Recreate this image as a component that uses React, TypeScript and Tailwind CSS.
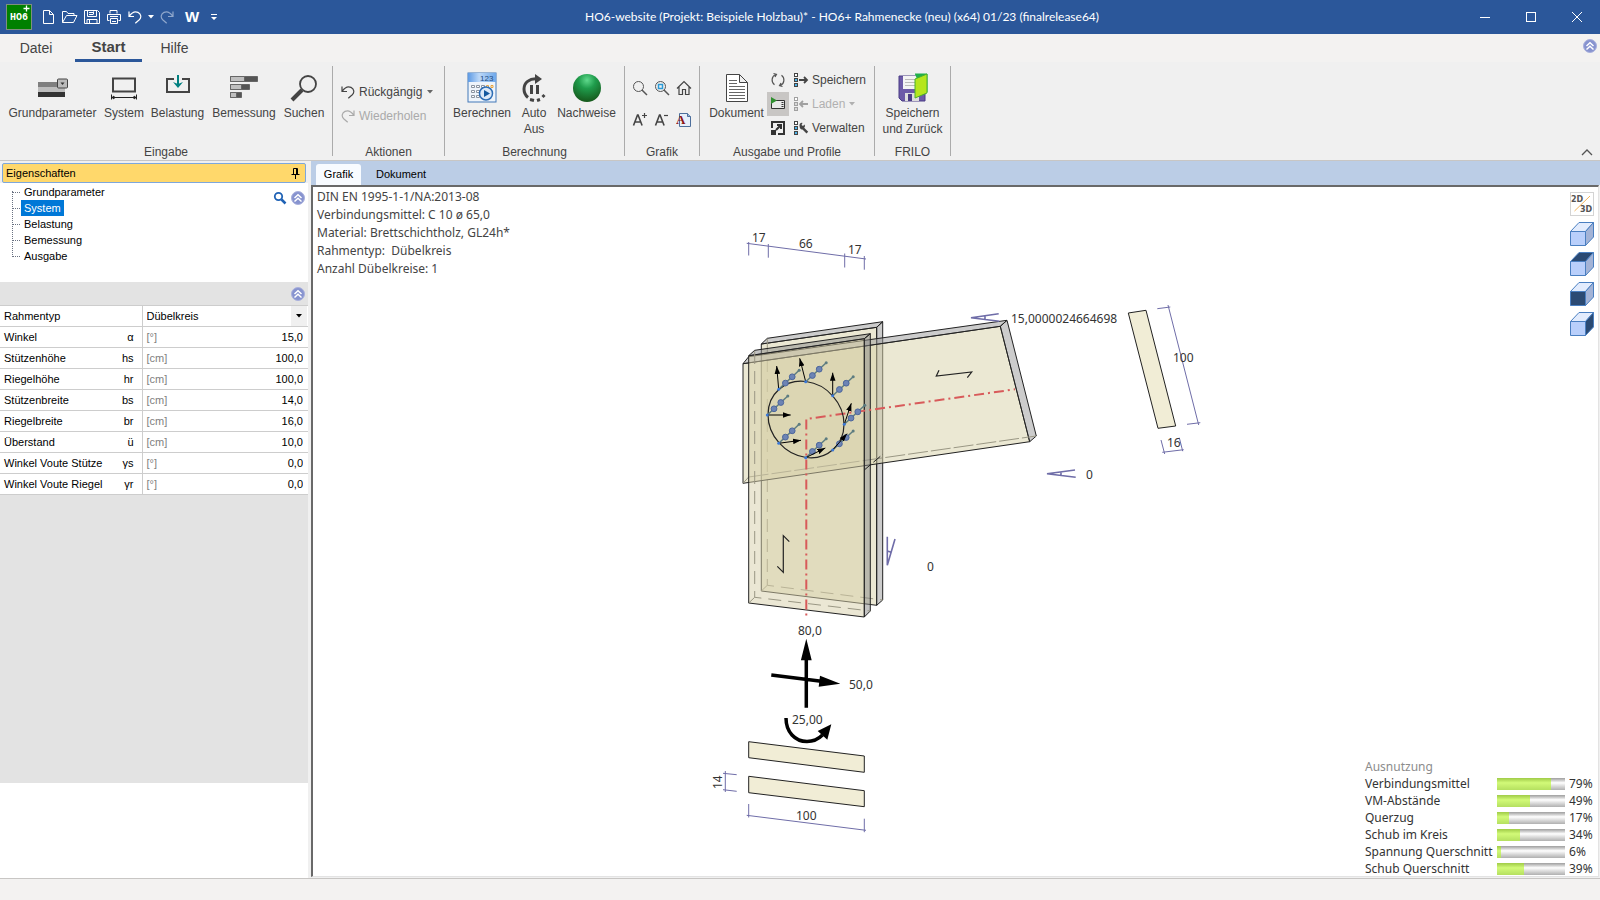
import type { ReactNode } from 'react';

const ui = "font-['Liberation_Sans',Arial,sans-serif]";
const draw = "font-['Noto_Sans','Open_Sans',sans-serif]";

const properties = [
  { id: 'winkel', name: 'Winkel', symbol: 'α', unit: '[°]', value: '15,0' },
  { id: 'hs', name: 'Stützenhöhe', symbol: 'hs', unit: '[cm]', value: '100,0' },
  { id: 'hr', name: 'Riegelhöhe', symbol: 'hr', unit: '[cm]', value: '100,0' },
  { id: 'bs', name: 'Stützenbreite', symbol: 'bs', unit: '[cm]', value: '14,0' },
  { id: 'br', name: 'Riegelbreite', symbol: 'br', unit: '[cm]', value: '16,0' },
  { id: 'ue', name: 'Überstand', symbol: 'ü', unit: '[cm]', value: '10,0' },
  { id: 'ys', name: 'Winkel Voute Stütze', symbol: 'γs', unit: '[°]', value: '0,0' },
  { id: 'yr', name: 'Winkel Voute Riegel', symbol: 'γr', unit: '[°]', value: '0,0' },
];

const treeItems = ['Grundparameter', 'System', 'Belastung', 'Bemessung', 'Ausgabe'];

const utilisation = [
  { name: 'Verbindungsmittel', value: 79 },
  { name: 'VM-Abstände', value: 49 },
  { name: 'Querzug', value: 17 },
  { name: 'Schub im Kreis', value: 34 },
  { name: 'Spannung Querschnitt', value: 6 },
  { name: 'Schub Querschnitt', value: 39 },
];

const info = [
  'DIN EN 1995-1-1/NA:2013-08',
  'Verbindungsmittel: C 10 ø 65,0',
  'Material: Brettschichtholz, GL24h*',
  'Rahmentyp:  Dübelkreis',
  'Anzahl Dübelkreise: 1',
];

function UndoIcon({ flip = false }: { flip?: boolean }) {
  return (
    <svg width="14" height="14" viewBox="0 0 14 14" fill="none" stroke="currentColor" strokeWidth="1.2" className={flip ? '-scale-x-100' : ''}>
      <path d="M1 1.500v5h5M1.300 6.200C3.500 3 7 1 10 2.400c3.300 1.600 3.600 5.200 1.300 7.400L7.300 13.300" />
    </svg>
  );
}

function ChevronBadge() {
  return (
    <svg width="14" height="14" viewBox="0 0 14 14">
      <circle cx="7" cy="7" r="6.500" fill="#8793cf" stroke="#a9b0dc" />
      <path d="M3.500 7 7 3.700 10.500 7M3.500 10.500 7 7.200l3.500 3.300" fill="none" stroke="#fff" strokeWidth="1.500" />
    </svg>
  );
}

function Caret() {
  return (
    <svg width="6" height="4" viewBox="0 0 6 4" fill="currentColor">
      <path d="M0 0h6L3 3.500z" />
    </svg>
  );
}

function TitleBar() {
  return (
    <header className="h-[34px] shrink-0 bg-[#2b579a] text-white flex items-center justify-between">
      <div className="flex items-center pl-[6px]">
        <svg width="26" height="26" viewBox="0 0 26 26">
          <rect x=".5" y=".5" width="25" height="25" fill="#008000" stroke="#7f8f7f" />
          <text x="4" y="16" fontSize="10" fontWeight="bold" fill="#fff" fontFamily="Liberation Mono">HO6</text>
          <path d="M20.500 1.500v6M17.500 4.500h6" stroke="#fff" strokeWidth="1.300" />
        </svg>
        <div className="ml-2 flex items-center gap-[6px]">
          <button aria-label="Neu" className="w-4">
            <svg width="16" height="16" viewBox="0 0 16 16" fill="none" stroke="#fff">
              <path d="M3.500 1.500h6l4 4v9h-10zM9.500 1.500v4h4" />
            </svg>
          </button>
          <button aria-label="Öffnen" className="w-4">
            <svg width="16" height="16" viewBox="0 0 16 16" fill="none" stroke="#fff">
              <path d="M.5 13.500v-11h4l1.500 2h6v2M.5 13.500h11l3.500-7H4.500z" />
            </svg>
          </button>
          <button aria-label="Speichern" className="w-4">
            <svg width="16" height="16" viewBox="0 0 16 16" fill="none" stroke="#fff">
              <path d="M.5 1.500h13l2 2v11H.5zM3.500 1.500v6h9v-6M3 14.500v-4h10v4M5.500 10.500v4M9.500 2.500v3M5 3.500h4M5 5.500h4" />
            </svg>
          </button>
          <button aria-label="Drucken" className="w-4">
            <svg width="16" height="16" viewBox="0 0 16 16" fill="none" stroke="#fff">
              <path d="M4 4.500v-3h7v3M3.500 11.500h-2v-6h13v6h-2M4.500 9.500h7v5h-7zM4 7.500h8M6 12.500h4" />
            </svg>
          </button>
          <button aria-label="Rückgängig" className="w-3.5"><UndoIcon /></button>
          <button aria-label="Liste"><Caret /></button>
          <button aria-label="Wiederholen" className="w-3.5 text-[#8fa7cc]"><UndoIcon flip /></button>
          <button aria-label="Word" className={`${ui} ml-1 w-4 text-[15px] leading-4 font-bold`}>W</button>
          <button aria-label="Anpassen" className="ml-1 w-3">
            <svg width="8" height="8" viewBox="0 0 8 8" fill="#fff"><path d="M1 1h6v1H1zM1 4h6L4 7z" /></svg>
          </button>
        </div>
      </div>
      <h1 className="font-[Lato,sans-serif] text-[12px] leading-4 whitespace-nowrap">
        HO6-website (Projekt: Beispiele Holzbau)* - HO6+ Rahmenecke (neu) (x64) 01/23 (finalrelease64)
      </h1>
      <div className="flex h-full">
        <button aria-label="Minimieren" className="w-[46px] grid place-items-center">
          <svg width="10" height="10"><path d="M0 5.500h10" stroke="#fff" /></svg>
        </button>
        <button aria-label="Maximieren" className="w-[46px] grid place-items-center">
          <svg width="10" height="10"><rect x=".5" y=".5" width="9" height="9" fill="none" stroke="#fff" /></svg>
        </button>
        <button aria-label="Schließen" className="w-[46px] grid place-items-center">
          <svg width="10" height="10"><path d="M0 0l10 10M10 0 0 10" stroke="#fff" /></svg>
        </button>
      </div>
    </header>
  );
}

function Group({ label, className, children }: { label: string; className: string; children: ReactNode }) {
  return (
    <section className={`flex flex-col border-r border-[#ababab] ${className}`}>
      <div className="flex-1 flex justify-center">{children}</div>
      <h2 className="h-3 text-center leading-4">{label}</h2>
    </section>
  );
}

function BigButton({ icon, lines, className }: { icon: ReactNode; lines: string[]; className: string }) {
  return (
    <button className={`flex flex-col items-center pt-[5px] ${className}`}>
      <span className="h-[34px] grid place-items-center">{icon}</span>
      {lines.map((line) => (
        <span key={line} className="leading-4 whitespace-nowrap">{line}</span>
      ))}
    </button>
  );
}

// row of three squares used by the profile commands
function ProfileIcon({ kind }: { kind: 'save' | 'load' | 'manage' }) {
  const off = kind === 'load';
  const line = off ? '#a0a0a0' : '#444';
  const fill = off ? '#d8d8d8' : '#4fb3e8';
  return (
    <svg width="16" height="16" viewBox="0 0 16 16" fill="none" stroke={line}>
      <rect x="1.500" y="1.500" width="3" height="3" fill="#fff" />
      <rect x="1.500" y="6.500" width="3" height="3" fill={fill} />
      <rect x="1.500" y="11.500" width="3" height="3" fill={fill} />
      {kind === 'save' && <path d="M6 8h8M11 5l3 3-3 3" strokeWidth="1.800" />}
      {kind === 'load' && <path d="M15 8H7M10 5 7 8l3 3" strokeWidth="1.800" />}
      {kind === 'manage' && (
        <path d="M6.500 5.500c0-2 1.500-3 3-2.500L8.500 5l1.500 1 1.500-1.500c.8 1.200.5 2.500-.3 3.200l4 4-1.700 1.700-4-4c-1.500.4-3-.9-3-3.900z" fill={line} stroke="none" />
      )}
    </svg>
  );
}

function Ribbon() {
  return (
    <div className={`${ui} shrink-0 bg-[#f0f0f0] text-[#444] text-[12px]`}>
      <nav className="h-7 bg-[#f3f2f1] flex justify-between text-[14px]">
        <div className="flex pl-[9px]">
          <button className="w-[54px]">Datei</button>
          <button className="ml-3 w-[67px] border-b-3 border-[#2b579a] text-[15px] font-bold leading-6">Start</button>
          <button className="ml-3 w-[41px]">Hilfe</button>
        </div>
        <button aria-label="Info" className="pr-[3px] pb-1"><ChevronBadge /></button>
      </nav>
      <div className="relative h-[99px] flex pt-1 pb-1 border-b border-[#c8c6c4]">
        <Group label="Eingabe" className="w-[333px]">
          <BigButton className="w-[97px]" lines={['Grundparameter']} icon={
            <svg width="32" height="22" viewBox="0 0 32 22">
              <path fill="#7f7f7f" d="M1 5h27v6H1z" /><path fill="#bdbdbd" d="M1 10h27v5H1z" /><path fill="#333" d="M1 15h27v5H1z" />
              <rect x="20.500" y="2" width="10" height="9" rx="1" fill="#bbb" stroke="#444" /><path fill="#333" d="M23.500 5.500h4l-2 2.500z" />
            </svg>
          } />
          <BigButton className="w-[46px]" lines={['System']} icon={
            <svg width="28" height="26" viewBox="0 0 28 26" fill="none" stroke="#444">
              <rect x="3" y="3.500" width="22" height="13" strokeWidth="2" />
              <path d="M1.500 19.500v5M26.500 19.500v5M2 22.500h24M2 22.500l2-1.500v3zM26 22.500l-2-1.500v3z" stroke="#222" />
            </svg>
          } />
          <BigButton className="w-[61px]" lines={['Belastung']} icon={
            <svg width="26" height="26" viewBox="0 0 26 26" fill="none">
              <path d="M9 4H2v13h22V4h-7" stroke="#444" strokeWidth="2" />
              <path d="M13 0v9" stroke="#008080" strokeWidth="2" /><path d="M8 7l5 2 5-2-5 6z" fill="#008080" />
            </svg>
          } />
          <BigButton className="w-[72px]" lines={['Bemessung']} icon={
            <svg width="30" height="26" viewBox="0 0 30 26" fill="#bfbfbf" stroke="#666">
              <path fill="#555" d="M1.500 1.500h27v5h-27zM1.500 9.500h19v5h-19zM1.500 17.500h11v5h-11z" />
              <path d="M1.500 1.500h14v5h-14zM1.500 9.500h11v5h-11zM1.500 17.500h6v5h-6z" />
            </svg>
          } />
          <BigButton className="w-12" lines={['Suchen']} icon={
            <svg width="28" height="28" viewBox="0 0 28 28" fill="none" stroke="#444">
              <circle cx="18" cy="10" r="8" strokeWidth="1.800" /><path d="M12 16 2 26" strokeWidth="4" />
            </svg>
          } />
        </Group>
        <Group label="Aktionen" className="w-28">
          <div className="w-full pl-2 pt-[14px] flex flex-col">
            <button className="h-6 flex items-center gap-1 whitespace-nowrap"><UndoIcon />Rückgängig<span className="ml-px text-[#666]"><Caret /></span></button>
            <button className="h-6 flex items-center gap-1 text-[#aaa]" disabled><UndoIcon flip />Wiederholen</button>
          </div>
        </Group>
        <Group label="Berechnung" className="w-[180px]">
          <BigButton className="w-[66px]" lines={['Berechnen']} icon={
            <svg width="30" height="32" viewBox="0 0 30 32">
              <defs><linearGradient id="calc" x2="1" y2="0"><stop stopColor="#5d9ae4" /><stop offset=".4" stopColor="#bcd8f8" /><stop offset="1" stopColor="#6fa8ea" /></linearGradient></defs>
              <rect x="1" y="1" width="28" height="29" fill="#eef4fb" stroke="#4378b8" /><path d="M1 1h28v9H1z" fill="url(#calc)" />
              <text x="13" y="9" fontSize="8" fill="#234b80" fontFamily="Liberation Sans">123</text>
              <g fill="#fff" stroke="#8a93a0"><path d="M4.500 13.500h3v2h-3zM9.500 13.500h3v2h-3zM14.500 13.500h3v2h-3zM4.500 18.500h3v2h-3zM9.500 18.500h3v2h-3zM4.500 23.500h3v2h-3zM9.500 23.500h3v2h-3z" /><path stroke="#e8a33c" d="M19.500 13.500h2v2h-2zM24 13.500h2v2h-2z" /></g>
              <circle cx="19" cy="21.500" r="6.500" fill="#dbe8f8" stroke="#2d6db5" strokeWidth="1.500" /><path d="M17 18l6 3.500-6 3.500z" fill="#14589f" />
            </svg>
          } />
          <BigButton className="w-[38px]" lines={['Auto', 'Aus']} icon={
            <svg width="26" height="30" viewBox="0 0 26 30" fill="none" stroke="#444" strokeWidth="3">
              <path d="M17 6C8 5 3 10 3 16c0 4 1.500 6.500 4 8.500" /><path d="M14 1l7 5-7 5z" fill="#444" stroke="none" />
              <path d="M10.500 12v9M16.500 12v9M9 26.500l4 1M16 27.500l3-1M21.500 24l2-2" />
            </svg>
          } />
          <BigButton className="w-[67px]" lines={['Nachweise']} icon={
            <svg width="30" height="30" viewBox="0 0 30 30">
              <defs><radialGradient id="ball" cx=".5" cy=".22" r=".75"><stop stopColor="#5fd98c" /><stop offset=".4" stopColor="#1f9c4c" /><stop offset="1" stopColor="#165c1e" /></radialGradient></defs>
              <circle cx="15" cy="15" r="14" fill="url(#ball)" />
            </svg>
          } />
        </Group>
        <Group label="Grafik" className="w-[75px]">
          <div className="grid grid-cols-3 grid-rows-2 w-[66px] h-16 mt-[6px] place-items-center">
            <button aria-label="Zoom"><svg width="16" height="16" viewBox="0 0 16 16" fill="none" stroke="#555"><circle cx="6.500" cy="6.500" r="5" /><path d="M10 10l5 5" strokeWidth="1.500" /></svg></button>
            <button aria-label="Zoom Fenster"><svg width="16" height="16" viewBox="0 0 16 16" fill="none" stroke="#555"><circle cx="6.500" cy="6.500" r="5" /><path d="M10 10l5 5" strokeWidth="1.500" /><path d="M4.500 4.500h4v4h-4z" stroke="#2c9bd6" strokeWidth="1.500" /></svg></button>
            <button aria-label="Alles zeigen"><svg width="16" height="16" viewBox="0 0 16 16" fill="none" stroke="#444" strokeWidth="1.200"><path d="M1 8.500 8 1.500l7 7M3 7v7.500h3.500v-5h3v5H13V7" /></svg></button>
            <button aria-label="Schrift größer">
              <svg width="16" height="16" viewBox="0 0 16 16" fill="none" stroke="#444"><path d="M1.500 13.500 5.500 3h.6l4 10.500M3 10h5.500" strokeWidth="1.600" /><path d="M12.500 1v5M10 3.500h5" strokeWidth="1.200" /></svg>
            </button>
            <button aria-label="Schrift kleiner">
              <svg width="16" height="16" viewBox="0 0 16 16" fill="none" stroke="#444"><path d="M1.500 13.500 5.500 3h.6l4 10.500M3 10h5.500" strokeWidth="1.600" /><path d="M10 3.500h4" strokeWidth="1.200" /></svg>
            </button>
            <button aria-label="Schriftart">
              <svg width="16" height="16" viewBox="0 0 16 16"><path d="M3.500 1.500h8l3 3v10h-11z" fill="#e6effa" stroke="#4d6f9c" /><path d="M11.500 1.500v3h3" fill="#9db9dc" stroke="#4d6f9c" /><text x="0" y="12" fontSize="13" fontWeight="bold" fill="#8b1414" fontFamily="Liberation Serif">A</text></svg>
            </button>
          </div>
        </Group>
        <Group label="Ausgabe und Profile" className="w-[175px]">
          <BigButton className="w-[61px] ml-[6px]" lines={['Dokument']} icon={
            <svg width="22" height="30" viewBox="0 0 22 30" fill="#fff" stroke="#444">
              <path d="M.5 1.500h13l8 8v19H.5zM13.500 1.500v8h8" /><path d="M3 7.500h8M3 10.500h8M3 13.500h16M3 16.500h16M3 19.500h16M3 22.500h16M3 25.500h16" stroke="#666" />
            </svg>
          } />
          <div className="flex flex-col pt-[2px]">
            <button aria-label="Aktualisieren" className="w-[22px] h-6 grid place-items-center">
              <svg width="16" height="16" viewBox="0 0 16 16" fill="none" stroke="#555" strokeWidth="1.200"><path d="M5.500 2.500a6 6 0 0 0-1 10.200M10.500 13.500a6 6 0 0 0 1-10.200M3.500 1.500l3 .8L5 5M12.500 14.500l-3-.8L11 11" /></svg>
            </button>
            <button aria-label="Vorschau" className="w-[22px] h-6 bg-[#c8c6c4] grid place-items-center">
              <svg width="16" height="16" viewBox="0 0 16 16"><path d="M1.500 4.500h13v8h-13z" fill="#e8e8e8" stroke="#333" /><path d="M12.500 4v9" stroke="#333" strokeDasharray="1 1" strokeWidth="2" /><path d="M1 1l6 3.500L1 8z" fill="#2f8f2f" /></svg>
            </button>
            <button aria-label="Extern öffnen" className="w-[22px] h-6 grid place-items-center">
              <svg width="16" height="16" viewBox="0 0 16 16" fill="none" stroke="#333" strokeWidth="2"><path d="M2 8V2h12v12H8" /><path d="M1 10h5v5H1z" fill="#333" stroke="none" /><path d="M7 5h4v4M11 5 6 10" /></svg>
            </button>
          </div>
          <div className="flex-1 flex flex-col pt-[2px] pl-1">
            <button className="h-6 flex items-center gap-[3px]"><ProfileIcon kind="save" />Speichern</button>
            <button className="h-6 flex items-center gap-[3px] text-[#b0b0b0]" disabled><ProfileIcon kind="load" />Laden<span className="ml-px"><Caret /></span></button>
            <button className="h-6 flex items-center gap-[3px]"><ProfileIcon kind="manage" />Verwalten</button>
          </div>
        </Group>
        <Group label="FRILO" className="w-[76px]">
          <BigButton className="w-[68px]" lines={['Speichern', 'und Zurück']} icon={
            <svg width="30" height="30" viewBox="0 0 30 30">
              <path d="M1 3h26v25H4l-3-3z" fill="#6c5aa8" stroke="#4b3d85" /><path d="M5 3h14v13H5z" fill="#f4f4f4" /><path d="M7 6.500h10M7 9.500h10M7 12.500h10" stroke="#bbb" />
              <path d="M7 20h14v8H7z" fill="#ddd" /><path d="M10 21h4v7h-4z" fill="#4b3d85" />
              <path d="M17 1h12v18h-5" fill="#21b14b" stroke="#21b14b" /><path d="M29 1v19l-12 5V6z" fill="#b5e61d" stroke="#4ab02c" />
            </svg>
          } />
        </Group>
        <button aria-label="Menüband reduzieren" className="absolute right-[7px] bottom-1">
          <svg width="12" height="7" viewBox="0 0 12 7" fill="none" stroke="#555" strokeWidth="1.300"><path d="M1 6l5-5 5 5" /></svg>
        </button>
      </div>
    </div>
  );
}

function Sidebar() {
  return (
    <aside className={`${ui} w-[308px] shrink-0 flex flex-col text-[11px] text-black`}>
      <div className="h-5 mt-[2px] mx-[2px] pl-[3px] pr-[5px] shrink-0 flex items-center justify-between bg-[#ffd86b] border border-[#7da7dc] rounded-[2px]">
        <h2>Eigenschaften</h2>
        <button aria-label="Anheften">
          <svg width="9" height="11" viewBox="0 0 9 11" fill="none" stroke="#000"><path d="M2.500 6V.5h4V6M5.500.5V6M.5 6.500h8M4.500 7v4" /></svg>
        </button>
      </div>
      <div className="h-[99px] shrink-0 bg-white flex justify-between">
        <ul className="relative ml-3 pt-px">
          <li aria-hidden className="absolute left-0 top-2 h-[66px] border-l border-dotted border-gray-500" />
          {treeItems.map((item) => (
            <li key={item} className="h-4 flex items-center">
              <span className="w-2 border-t border-dotted border-gray-500" />
              <button className={item === 'System' ? 'ml-px h-4 px-[3px] bg-[#0078d7] text-white' : 'ml-px h-4 px-[3px]'}>{item}</button>
            </li>
          ))}
        </ul>
        <div className="flex gap-1 pr-[3px] pt-2 h-5">
          <button aria-label="Suchen">
            <svg width="14" height="14" viewBox="0 0 14 14" fill="none" stroke="#1f62b5"><circle cx="5.500" cy="5.500" r="3.700" strokeWidth="1.800" /><path d="M8.500 8.500l4 4" strokeWidth="2.500" /></svg>
          </button>
          <button aria-label="Einklappen"><ChevronBadge /></button>
        </div>
      </div>
      <div className="h-[23px] shrink-0 bg-[#e3e3e3] flex items-center justify-end pr-[3px]">
        <button aria-label="Einklappen"><ChevronBadge /></button>
      </div>
      <table className="w-full shrink-0 table-fixed border-collapse bg-white">
        <tbody>
          <tr className="h-[21px] border-y border-[#cdcdcd]">
            <th scope="row" className="w-[142px] p-0 pl-1 border-r border-[#cdcdcd] text-left font-normal"><label htmlFor="rahmentyp">Rahmentyp</label></th>
            <td className="p-0">
              <div className="flex items-center pr-px">
                <select id="rahmentyp" className="flex-1 h-5 pl-1 appearance-none bg-transparent outline-none">
                  <option>Dübelkreis</option>
                </select>
                <span className="w-4 h-5 bg-[#f0f0f0] grid place-items-center pointer-events-none"><Caret /></span>
              </div>
            </td>
          </tr>
          {properties.map((p) => (
            <tr key={p.id} className="h-[21px] border-b border-[#cdcdcd]">
              <th scope="row" className="p-0 pl-1 pr-2 border-r border-[#cdcdcd] text-left font-normal">
                <label htmlFor={p.id} className="flex justify-between whitespace-nowrap"><span>{p.name}</span><span>{p.symbol}</span></label>
              </th>
              <td className="p-0">
                <div className="flex items-center pl-1 pr-[5px]">
                  <span className="text-[#808080]">{p.unit}</span>
                  <input id={p.id} defaultValue={p.value} className="flex-1 min-w-0 h-5 text-right bg-transparent outline-none" />
                </div>
              </td>
            </tr>
          ))}
        </tbody>
      </table>
      <div className="flex-1 bg-[#e3e3e3]" />
      <div className="h-[95px] shrink-0 bg-white" />
    </aside>
  );
}

const dowels = [
  { x: 767.300, y: 415, tx: 790.700, ty: 415 },
  { x: 778.700, y: 389.300, tx: 776.700, ty: 366 },
  { x: 805.700, y: 381.700, tx: 799.700, ty: 358.300 },
  { x: 832.700, y: 395.700, tx: 832.700, ty: 372.700 },
  { x: 844.300, y: 424.300, tx: 851.300, ty: 403.300 },
  { x: 832.700, y: 450, tx: 847, ty: 433.700 },
  { x: 805.700, y: 457.700, tx: 825.300, ty: 448 },
  { x: 778.700, y: 443.300, tx: 801, ty: 440.300 },
];

function FrameDrawing() {
  return (
    <svg width="510" height="620" viewBox="701 222 510 620" fill="none" stroke="#222" strokeWidth="1" role="img" aria-label="Rahmenecke">
      <defs>
        <marker id="tip" markerUnits="userSpaceOnUse" markerWidth="8" markerHeight="6" refX="8" refY="3" orient="auto">
          <path d="M0 .2 8 3 0 5.800z" fill="#000" stroke="none" />
        </marker>
      </defs>

      {/* rear post */}
      <path d="M761.300 344V591l115.400 14.300V327.300z" fill="#d7d2a7" fillOpacity=".5" />
      <path d="M761.300 344l6-5.700 115.400-16.600-6 5.600zM876.700 327.300l6-5.600V600l-6 5.300z" fill="#999" fillOpacity=".5" />
      <path d="M767.300 339v246.300L882.700 600" stroke="#9a9784" strokeDasharray="13 7" />
      <path d="M767.300 585.300l-6 5.700" stroke="#9a9784" />

      {/* beam */}
      <path d="M743 363.700l257.300-37.400 29.400 115.400L743 483.300z" fill="#d7d2a7" fillOpacity=".5" />
      <path d="M743 363.700l5.700-7L1007 320.300l-6.700 6zM1000.300 326.300l6.700-6L1036.300 436l-6.600 5.700z" fill="#999" fillOpacity=".5" />
      <path d="M748.700 477 1036 436" stroke="#9a9784" strokeDasharray="20 3" />
      <path d="M743 483.300l5.700-6.300" stroke="#9a9784" />

      {/* front post */}
      <path d="M748.700 355.700V603l115.600 14V338.700z" fill="#d7cfa9" fillOpacity=".5" />
      <path d="M748.700 355.700l6-5.400 115.600-16.600-6 5zM864.300 338.700l6-5V611l-6 6z" fill="#888" fillOpacity=".5" />
      <path d="M754.700 351v246.300L870.300 611" stroke="#9a9784" strokeDasharray="13 7" />
      <path d="M754.700 597.300l-6 5.700" stroke="#9a9784" />
      <path d="M864.300 470l18.400-15.700" strokeDasharray="9 3" />

      <path d="M806.300 615.500V419L1015 389.300" stroke="#d85a5a" strokeWidth="2" strokeDasharray="2 4 10 4" />
      <circle r="38" transform="matrix(1 .126 0 1 806 419.500)" strokeWidth="1.200" />
      <path d="M939 370.300l-2.700 5.700 35.400-4-4.400 5.700M789.300 541.700l-6-6v36.600l-6-6" strokeWidth="1.200" />

      {dowels.map((d) => (
        <g key={`${d.x}-${d.y}`}>
          <path d={`M${d.x} ${d.y}l20.500-19`} stroke="#5d7c80" strokeWidth="1.500" />
          <g fill="#6d84b4" stroke="#4d669c">
            <circle cx={d.x + 6.700} cy={d.y - 6.200} r="2.900" />
            <circle cx={d.x + 13.500} cy={d.y - 12.500} r="2.900" />
          </g>
          <circle cx={d.x + 20.500} cy={d.y - 19} r="1.500" fill="#5d7c80" stroke="none" />
          <path d={`M${d.x} ${d.y}L${d.tx} ${d.ty}`} stroke="#000" markerEnd="url(#tip)" />
          <circle cx={d.x} cy={d.y} r="1.500" fill="#3a78d8" stroke="none" />
        </g>
      ))}

      {/* loads */}
      <g fill="#000" stroke="none">
        <path d="M806.300 638.700l5.400 21.500h-10.800zM840.300 683.700l-20.300-8-1.300 11zM831.300 724.300 817.700 731l9.600 8.700z" />
        <path d="M806.300 707.700V655M771.300 675l50 6.300M786 718c0 14 9 23.500 21 23.500 7 0 11-2 15.500-6.500" fill="none" stroke="#000" strokeWidth="3.500" />
      </g>

      {/* cross sections */}
      <g fill="#f1edd6">
        <path d="M748.700 741.700l115.600 14.300v16.300l-115.600-14.600zM748.700 776.300l115.600 14.400v16l-115.600-14z" />
        <path d="M1128.300 313l17.700-2.700L1175.700 426l-17.700 2.300z" />
      </g>

      {/* dimension lines */}
      <g stroke="#6f6da8">
        <path d="M746.700 243.300 866 259M748.700 242v13.500M768.300 244v13.700M844.700 253.500v14M864.300 256v13.700" />
        <path d="M725.300 771v21M723 773.300l13.700 1.400M723 789.700l13.700 1.600" />
        <path d="M748.700 804v13.500M746.700 815.300l119.300 15M864.300 818.700v13.500" />
        <path d="M1157.300 308.700l13-1.700M1168 305l30.700 120M1187 424.300l13.300-1.600" />
        <path d="M1161 440l3.700 14M1162.300 452.300l21.400-2.600M1179.300 437.700l3.400 13.500" />
        <path strokeWidth="1.600" d="M998.700 313.700l-27.700 4 28.300 3.500M985 316v3.500M1075 470l-28 3.700 28.700 3.600M1061 472v3.500M887.300 536.700v28.600L895 539M887.300 551l4 1.300" />
      </g>

      <g fill="#333" stroke="none" fontSize="12" className={draw}>
        <text x="752" y="242">17</text>
        <text x="799" y="248">66</text>
        <text x="848" y="254">17</text>
        <text x="1011" y="323">15,0000024664698</text>
        <text x="1173" y="362">100</text>
        <text x="1167" y="447">16</text>
        <text x="1086" y="479">0</text>
        <text x="927" y="571">0</text>
        <text x="798" y="635">80,0</text>
        <text x="849" y="689">50,0</text>
        <text x="792" y="724">25,00</text>
        <text x="796" y="820">100</text>
        <text x="0" y="0" transform="translate(722 789) rotate(-90)">14</text>
      </g>
    </svg>
  );
}

function Cube({ top = '#e3ecfd', front = '#b9cffb', side = '#a3b3d6' }: { top?: string; front?: string; side?: string }) {
  return (
    <svg width="24" height="24" viewBox="0 0 24 24" stroke="#4a7fc1" strokeLinejoin="round">
      <path d="M.5 9.500 9 .5h14.500l-8 9z" fill={top} />
      <path d="M15.500 9.500l8-9V15l-8 8.500z" fill={side} />
      <path d="M.5 9.500h15v14H.5z" fill={front} />
    </svg>
  );
}

function GraphicView() {
  return (
    <main className="flex-1 min-w-0 flex flex-col bg-[#f0f0f0]">
      <div className={`${ui} h-6 ml-[3px] shrink-0 bg-[#bbcde6] flex items-end text-[11px] text-black pl-[5px]`} role="tablist">
        <button role="tab" aria-selected className="h-[21px] w-[45px] pb-px bg-[#f8fbff] rounded-t-[3px]">Grafik</button>
        <button role="tab" className="h-[21px] ml-3 px-[3px] pb-px">Dokument</button>
      </div>
      <div className="relative flex-1 min-h-0 ml-[3px] mr-px mb-px flex items-center justify-center bg-white border-t-2 border-l-2 border-r border-b border-t-[#696969] border-l-[#696969] border-r-[#e3e3e3] border-b-[#e3e3e3]">
        <FrameDrawing />
        <div className={`${draw} absolute left-1 top-px text-[12px] leading-[18px] text-[#444] whitespace-pre`}>
          {info.map((line) => <p key={line}>{line}</p>)}
        </div>
        <div className="absolute right-1 top-[5px] flex flex-col gap-[6px]">
          <button aria-label="2D/3D" className="w-6 h-6">
            <svg width="24" height="24" viewBox="0 0 24 24">
              <rect x=".5" y=".5" width="23" height="23" fill="#fff" stroke="#d4d4d4" /><path d="M4.500 19 20 4" stroke="#f2b45c" />
              <g fontSize="8" fontWeight="bold" fill="#555" fontFamily="DejaVu Sans, sans-serif"><text x="1" y="10">2D</text><text x="10" y="20">3D</text></g>
            </svg>
          </button>
          <button aria-label="Isometrie"><Cube /></button>
          <button aria-label="Draufsicht"><Cube top="#2b4a73" /></button>
          <button aria-label="Vorderansicht"><Cube front="#2b4a73" /></button>
          <button aria-label="Seitenansicht"><Cube side="#2b4a73" /></button>
        </div>
        <section className={`${draw} absolute right-1 -bottom-px text-[12px] leading-[17px] text-[#333]`}>
          <h2 className="text-[#8c8c8c]">Ausnutzung</h2>
          {utilisation.map((u) => (
            <div key={u.name} className="flex items-center">
              <span className="w-[132px] whitespace-nowrap">{u.name}</span>
              <div className="w-[68px] h-3 bg-linear-to-b from-[#a8a8a8] from-5% via-white via-40% to-[#b0b0b0]">
                <div className="h-full bg-linear-to-b from-[#a5d04c] from-5% via-[#d2fa78] via-40% to-[#b5e060]" style={{ width: `${u.value}%` }} />
              </div>
              <span className="w-[29px] pl-1">{u.value}%</span>
            </div>
          ))}
        </section>
      </div>
    </main>
  );
}

export default function App() {
  return (
    <div className="h-screen flex flex-col overflow-hidden bg-[#f0f0f0]">
      <TitleBar />
      <Ribbon />
      <div className="flex-1 min-h-0 flex">
        <Sidebar />
        <GraphicView />
      </div>
      <footer className="h-[22px] shrink-0 bg-[#f3f2f1] border-t border-[#c8c6c4]" />
    </div>
  );
}
